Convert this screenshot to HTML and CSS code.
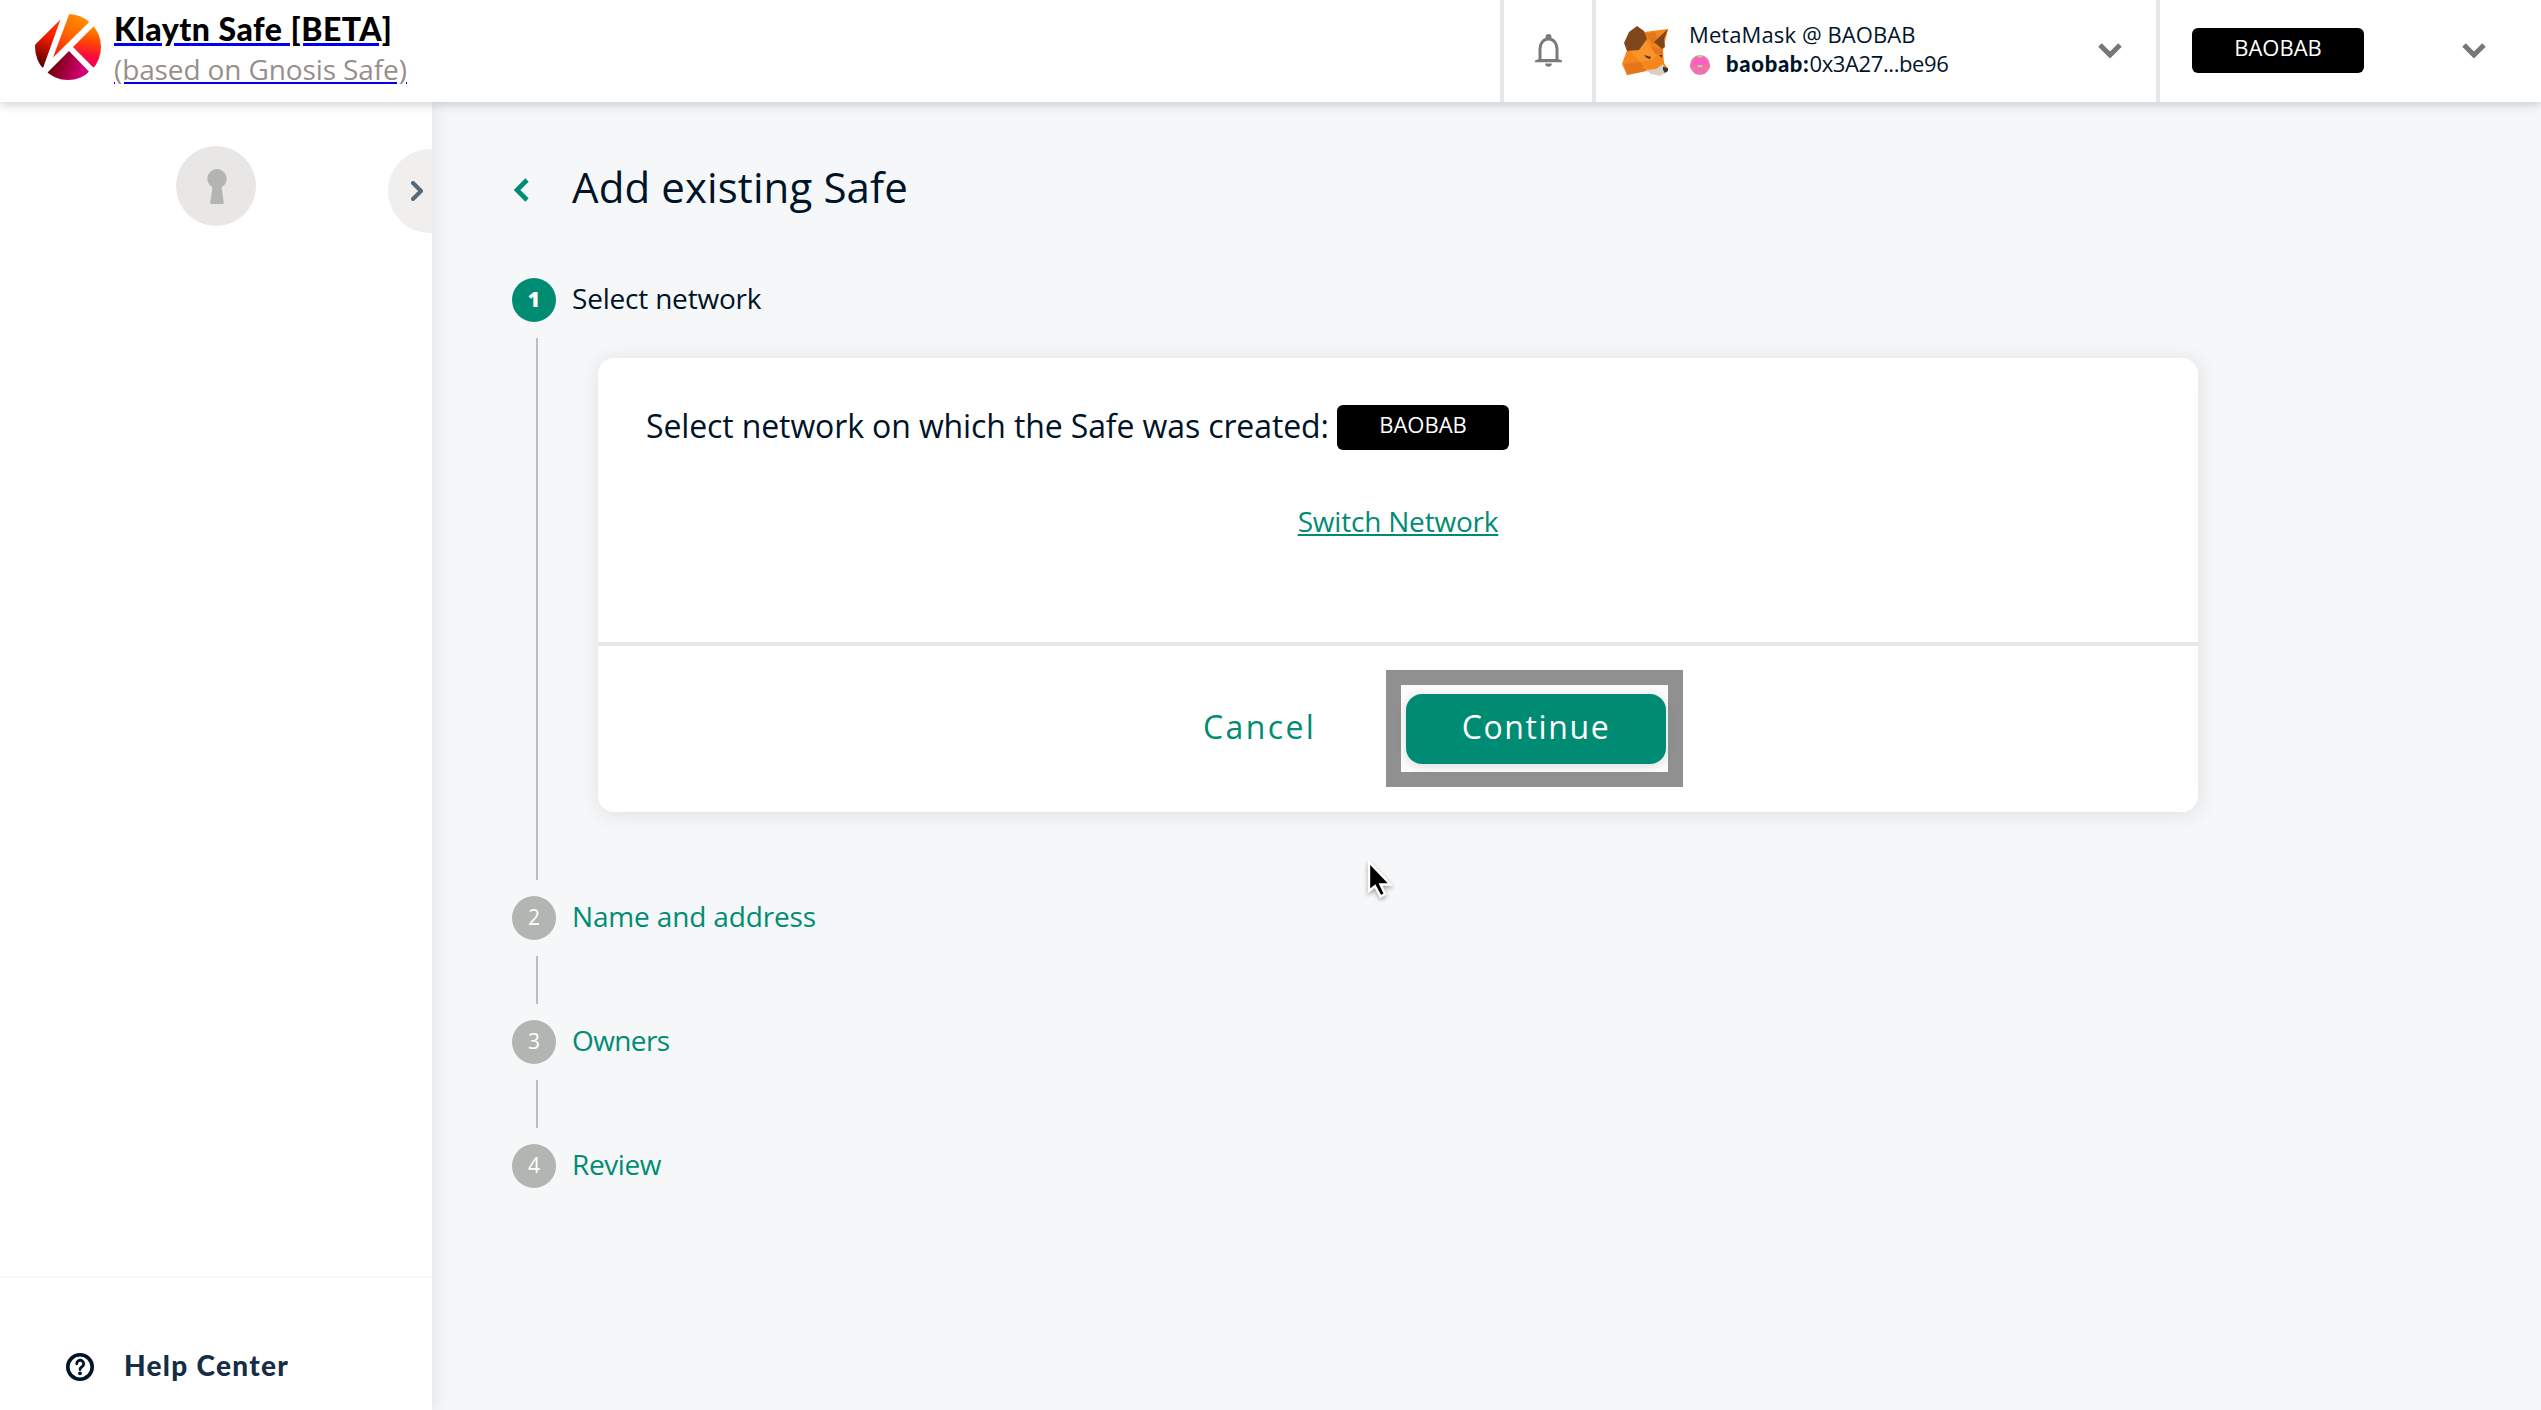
FILE: index.html
```html
<!DOCTYPE html>
<html lang="en">
<head>
<meta charset="utf-8">
<title>Klaytn Safe</title>
<link rel="stylesheet" href="styles.css">
</head>
<body>
<header class="header">
  <a class="brand" href="#">
    <svg class="brand-logo" viewBox="0 0 66 66">
      <defs>
        <linearGradient id="warm" gradientUnits="userSpaceOnUse" x1="60" y1="12" x2="52" y2="56"><stop offset="0" stop-color="#ff9000"/><stop offset=".35" stop-color="#ff4a00"/><stop offset=".7" stop-color="#fb0a3c"/><stop offset="1" stop-color="#e8005a"/></linearGradient>
        <linearGradient id="red" gradientUnits="userSpaceOnUse" x1="22" y1="8" x2="4" y2="50"><stop offset="0" stop-color="#ff3a00"/><stop offset=".4" stop-color="#f21800"/><stop offset="1" stop-color="#5c0000"/></linearGradient>
        <linearGradient id="plum" gradientUnits="userSpaceOnUse" x1="18" y1="48" x2="48" y2="60"><stop offset="0" stop-color="#74000c"/><stop offset="1" stop-color="#d80078"/></linearGradient>
        <linearGradient id="flame" gradientUnits="userSpaceOnUse" x1="48" y1="4" x2="22" y2="42"><stop offset="0" stop-color="#ff8c00"/><stop offset=".5" stop-color="#ff6200"/><stop offset="1" stop-color="#fa1c0c"/></linearGradient>
        <clipPath id="disc"><circle cx="33" cy="33" r="33"/></clipPath>
      </defs>
      <g clip-path="url(#disc)">
        <path fill="url(#red)" d="M25.500 5.500 8.200 53.500 0 56V30.700Z"/>
        <path fill="url(#flame)" d="M34.300 0H45L54.300 8 18 43.500Z"/>
        <path fill="url(#warm)" d="M59 12 70 18V60L58.300 53.500 38 33Z"/>
        <path fill="url(#plum)" d="M34 37 53.800 57.500 45 68H20L12.500 58.500Z"/>
      </g>
    </svg>
    <span class="brand-text">
      <span class="brand-name">Klaytn Safe [BETA]</span>
      <span class="brand-sub">(based on Gnosis Safe)</span>
    </span>
  </a>
  <div class="cell notifications">
    <svg class="bell" viewBox="0 0 27 33"><path fill="none" stroke="#7b7b7b" stroke-width="3" d="M5 27V14.500a8.500 9.500 0 0 1 17 0V27"/><path fill="#7b7b7b" d="M10.500 5V3a3 3 0 0 1 6 0v2ZM0 28.200v-1.700l4-1.500h19l4 1.500v1.700ZM10.200 29.500h6.600a3.300 3.300 0 0 1-6.600 0Z"/></svg>
  </div>
  <div class="cell wallet">
    <svg class="fox" viewBox="0 0 47 50">
      <path fill="#f6851b" d="M5 24 22 6 46 3 41 24 42 37 46 43 42 47 24 45 5 49 0 38Z"/>
      <path fill="#e4761b" d="M2 38 18 36 24 45 5 49ZM22 8 33 6 36 15 32 19ZM28 20 40 23 41 29 32 27Z"/>
      <path fill="#f89429" d="M24 14 35 30 30 34 18 36 8 25Z"/>
      <path fill="#80461b" d="M15 0 22 5 25 13 17 24 5 25 2 17 7 6ZM46 3 42 13 43 21 40 23 32 16Z"/>
      <path fill="#d9cfc5" d="M24 44 34 43 41 38 43 47 38 50 29 48Z"/>
      <path fill="#3a3433" d="M22 29 29 31 28 33 25 32ZM37 29 40 29 40 32ZM41 41 46 42 46 45 43 47 41 44Z"/>
    </svg>
    <div class="wallet-info">
      <div class="provider">MetaMask @ BAOBAB</div>
      <div class="account">
        <svg class="identicon" viewBox="0 0 20 20"><defs><clipPath id="dot"><circle cx="10" cy="10" r="10"/></clipPath></defs><g clip-path="url(#dot)"><path fill="#e87d9f" d="M0 0h20v20H0z"/><path fill="#ff5cc8" d="M5 2.500h10V5h2.500v5H15v2.500h-2.500V15h-5v-2.500H5V10H2.500V5H5zM5 15h2.500v5H5zM12.500 15H15v5h-2.500zM0 10h2.500v2.500H0zM17.500 10H20v2.500h-2.500z"/><path fill="#a6dc7c" d="M7.500 0h5v2.500h-5zM7.500 10h5v2.500h-5z"/></g></svg>
        <span><b class="prefix">baobab:</b><span class="address">0x3A27...be96</span></span>
      </div>
    </div>
    <svg class="chevron" viewBox="0 0 24 15"><path d="M2 2 12 12 22 2"/></svg>
  </div>
  <div class="cell network">
    <span class="badge">BAOBAB</span>
    <svg class="chevron" viewBox="0 0 24 15"><path d="M2 2 12 12 22 2"/></svg>
  </div>
</header>
<div class="body">
  <aside class="sidebar">
    <div class="safe-slot">
      <svg class="keyhole" viewBox="0 0 20 35"><path fill="#b2b5b2" d="M10 0a9.800 9.800 0 0 1 4.500 18.400L16.800 33.500Q17 35 15.500 35H4.500Q3 35 3.200 33.500L5.500 18.400A9.800 9.800 0 0 1 10 0Z"/></svg>
    </div>
    <div class="drawer-tab"><svg class="tab-arrow" viewBox="0 0 12 20"><path d="M2 2 10 10 2 18"/></svg></div>
    <a class="help">
      <svg class="help-icon" viewBox="0 0 28 28"><circle cx="14" cy="14" r="12.200" fill="none" stroke="#001428" stroke-width="3.600"/><path fill="none" stroke="#001428" stroke-width="2.800" stroke-linecap="round" d="M10.700 10.800a3.500 3.500 0 1 1 5.300 3c-1.300.8-2 1.400-2 2.700"/><circle cx="14" cy="20.300" r="1.900" fill="#001428"/></svg>
      <span class="help-text">Help Center</span>
    </a>
  </aside>
  <main class="main">
    <div class="title-row">
      <svg class="back" viewBox="0 0 15 24"><path d="M13 2 3 12 13 22"/></svg>
      <h1 class="title">Add existing Safe</h1>
    </div>
    <div class="step active"><span class="num">1</span><span class="label select-label">Select network</span></div>
    <div class="step-body">
      <section class="card">
        <div class="card-main">
          <div class="prompt"><span class="prompt-text">Select network on which the Safe was created:</span><span class="badge">BAOBAB</span></div>
          <a class="switch">Switch Network</a>
        </div>
        <div class="card-actions">
          <span class="cancel">Cancel</span>
          <div class="highlight"><span class="continue">Continue</span></div>
        </div>
      </section>
    </div>
    <div class="step"><span class="num">2</span><span class="label">Name and address</span></div>
    <div class="connector"></div>
    <div class="step"><span class="num">3</span><span class="label owners">Owners</span></div>
    <div class="connector"></div>
    <div class="step"><span class="num">4</span><span class="label review">Review</span></div>
  </main>
</div>
<svg class="cursor" viewBox="0 0 28 40"><path fill="#000" stroke="#fff" stroke-width="2.400" d="M2 2V31L8 26 13.500 36.500 18 34 13.500 24.500H23.500Z"/></svg>
</body>
</html>
```
FILE: styles.css
```css
* { box-sizing: border-box; }
body {
  margin: 0;
  height: 1410px;
  overflow: hidden;
  display: flex;
  flex-direction: column;
  font-family: "Open Sans", sans-serif;
  color: #001428;
  background: #f6f7f9;
}
svg { display: block; flex: none; }

.header {
  position: relative;
  z-index: 2;
  flex: none;
  display: flex;
  height: 102px;
  background: #fff;
  box-shadow: 0 4px 8px 0 rgba(40, 54, 61, 0.18);
}
.brand { flex: 1; display: flex; padding: 9px 0 0 35px; color: #0000ee; }
.brand-logo { width: 66px; height: 66px; margin: 5px 13px 0 0; }
.brand-text { display: flex; flex-direction: column; line-height: 40px; white-space: nowrap; }
.brand-name {
  font: 900 32px/40px Lato, sans-serif;
  letter-spacing: 0.5px;
  color: #000;
  text-decoration: underline 3px #0000ee;
  text-underline-offset: 2px;
}
.brand-sub {
  font-size: 28px;
  letter-spacing: -0.12px;
  color: #988e8c;
  text-decoration: underline 2px #0000ee;
  text-underline-offset: 2px;
}
.cell { display: flex; align-items: center; border-left: 4px solid #e8e7e6; }
.notifications { width: 92px; padding: 0 0 1px 31px; }
.bell { width: 27px; height: 33px; }
.wallet { width: 564px; padding: 0 34px 1px 26px; }
.fox { width: 47px; height: 50px; margin-right: 21px; }
.wallet-info { flex: 1; font-size: 22px; line-height: 29px; white-space: nowrap; padding-bottom: 4px; }
.provider { letter-spacing: 0.1px; margin-left: -1px; }
.account { display: flex; gap: 16px; }
.identicon { width: 20px; height: 20px; margin-top: 6px; }
.prefix { font-family: Lato, sans-serif; font-weight: 900; letter-spacing: 0.7px; }
.address { letter-spacing: -0.4px; }
.chevron { width: 24px; height: 15px; }
.chevron path { fill: none; stroke: #777; stroke-width: 5; }
.network { width: 385px; justify-content: space-between; padding: 0 55px 1px 32px; }
.badge {
  flex: none;
  width: 172px;
  height: 45px;
  border-radius: 6px;
  background: #000;
  color: #fff;
  font-size: 22px;
  line-height: 39px;
  text-align: center;
}

.body { flex: 1; display: flex; min-height: 0; }
.sidebar {
  position: relative;
  flex: none;
  width: 432px;
  display: flex;
  flex-direction: column;
  align-items: center;
  justify-content: space-between;
  padding-top: 44px;
  background: #fff;
  box-shadow: 4px 0 16px 0 rgba(40, 54, 61, 0.09);
}
.safe-slot {
  width: 80px;
  height: 80px;
  padding: 23px 0 0 31px;
  border-radius: 50%;
  background: #e8e7e6;
}
.keyhole { width: 20px; height: 35px; }
/* half-round tab that sticks to the drawer's edge */
.drawer-tab {
  position: absolute;
  top: 47px;
  right: 0;
  width: 44px;
  height: 84px;
  padding: 32px 0 0 23px;
  border-radius: 42px 0 0 42px;
  background: #f0efee;
}
.tab-arrow { width: 12px; height: 20px; }
.tab-arrow path { fill: none; stroke: #566976; stroke-width: 4; stroke-linecap: round; stroke-linejoin: round; }
.help {
  display: flex;
  align-items: center;
  gap: 30px;
  width: 100%;
  height: 134px;
  padding: 46px 0 0 66px;
  border-top: 2px solid #f6f7f8;
}
.help-icon { width: 28px; height: 28px; }
.help-text { font: 900 28px/28px Lato, sans-serif; letter-spacing: 1.3px; color: #162d45; padding-bottom: 5px; }

.main { flex: 1; padding: 54px 0 0 80px; }
.title-row { display: flex; align-items: center; height: 60px; }
.back { width: 15px; height: 24px; margin: 8px 43px 0 2px; }
.back path { fill: none; stroke: #008c73; stroke-width: 4.600; }
.title { margin: 0; padding-top: 1px; font-size: 42px; font-weight: 400; line-height: 60px; letter-spacing: 0.1px; }
.step { display: flex; align-items: center; height: 44px; gap: 16px; }
.step.active { margin-top: 62px; }
.num {
  width: 44px;
  height: 44px;
  border-radius: 50%;
  background: #b2b5b2;
  color: #fff;
  font-size: 21px;
  line-height: 42px;
  text-align: center;
}
.active .num { background: #008c73; font-weight: 800; }
.label { font-size: 28px; line-height: 28px; padding-bottom: 5px; letter-spacing: -0.15px; color: #008c73; }
.active .label { color: #001428; }
.select-label { letter-spacing: -0.2px; }
.owners { letter-spacing: -0.6px; }
.review { letter-spacing: -0.4px; }
.step-body { height: 542px; margin: 16px 0 16px 24px; padding: 20px 0 0 60px; border-left: 2px solid #bcbdbc; }
.connector { width: 2px; height: 48px; margin: 16px 0 16px 24px; background: #bcbdbc; }

.card { width: 1600px; height: 454px; border-radius: 16px; background: #fff; box-shadow: 1px 2px 20px 0 rgba(40, 54, 61, 0.12); }
.card-main { height: 288px; padding: 47px 48px 0; border-bottom: 4px solid #e8e7e6; }
.prompt { display: flex; align-items: center; height: 45px; }
.prompt-text { width: 691px; font-size: 32px; line-height: 39px; padding-bottom: 4px; letter-spacing: -0.12px; white-space: nowrap; }
.switch {
  display: block;
  margin-top: 51px;
  text-align: center;
  font-size: 28px;
  line-height: 40px;
  letter-spacing: -0.2px;
  color: #008c73;
  text-decoration: underline 2px;
  text-underline-offset: 2px;
  text-decoration-skip-ink: none;
}
.card-actions { display: flex; padding: 24px 0 0 605px; font-size: 32px; color: #008c73; }
.cancel { width: 183px; line-height: 113px; letter-spacing: 2.4px; }
.highlight { width: 297px; height: 117px; padding: 9px 2px 8px 5px; border: 15px solid #909090; background: #fbfbfb; }
.continue {
  display: block;
  height: 70px;
  border-radius: 16px;
  background: #008c73;
  box-shadow: 0 2px 8px rgba(40, 54, 61, 0.15);
  color: #fff;
  line-height: 65px;
  letter-spacing: 1.600px;
  text-align: center;
}
.cursor { position: absolute; left: 1367px; top: 860px; width: 28px; height: 40px; filter: drop-shadow(0 2px 2px rgba(0, 0, 0, 0.35)); }
```
